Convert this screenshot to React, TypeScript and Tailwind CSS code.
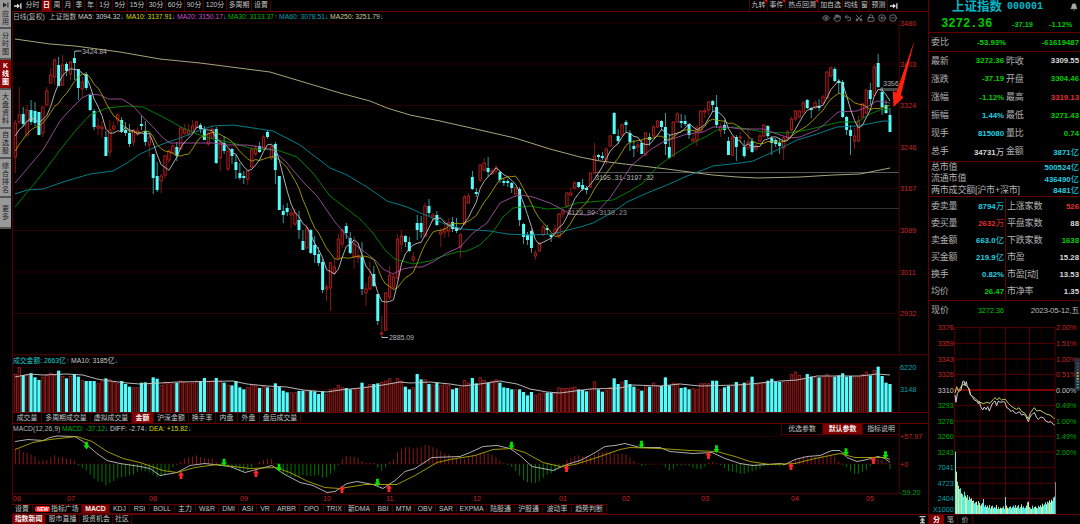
import React from 'react';
import { Bell, Eye, Hand, Undo2, Scissors, Lock, CirclePlus, CircleMinus } from 'lucide-react';
import clsx from 'clsx';

type Candle = [high: number, top: number, bottom: number, low: number, up: 0 | 1];
type Point = [number, number];
type TabItem = { label: string; width: string; active?: boolean; mark?: boolean; badge?: boolean };

const STEP = 3.94;
const xAt = (i: number) => 15.3 + i * STEP;

const candles: Candle[] = [
  [120,123,157,173,1],[87,115,122,124,1],[107,114,124,127,0],[105,110,135,137,1],[100,110,122,125,0],
  [102,111,123,126,0],[112,112,135,135,0],[107,107,133,137,1],[87,91,105,106,1],[68,75,83,84,1],
  [58,60,77,85,1],[57,65,86,86,0],[55,65,85,86,1],[62,64,71,76,0],[61,62,74,80,1],
  [51,58,63,80,0],[69,69,88,100,0],[77,82,89,98,1],[72,74,88,90,0],[95,95,110,111,0],
  [109,111,127,130,0],[118,126,128,135,1],[121,127,129,138,1],[131,137,156,156,0],[120,130,152,157,1],
  [121,126,129,132,1],[113,115,120,125,1],[117,120,132,133,0],[122,130,133,136,0],[124,133,144,147,0],
  [129,130,142,146,1],[127,131,134,136,1],[115,124,126,130,0],[121,131,142,146,0],[135,137,145,157,1],
  [154,154,178,194,0],[162,176,190,192,0],[174,176,181,193,1],[155,156,175,179,1],[149,151,160,163,1],
  [144,146,153,154,1],[142,147,156,161,0],[127,128,149,150,1],[124,129,133,135,1],[124,131,134,136,1],
  [120,126,132,133,1],[121,122,127,129,1],[123,125,129,133,0],[126,130,140,140,0],[132,133,144,146,1],
  [125,129,138,139,1],[127,129,163,164,0],[137,143,158,171,1],[136,143,151,154,0],[149,151,169,171,1],
  [148,149,156,164,0],[155,162,170,179,0],[163,173,178,180,0],[171,176,178,184,0],[170,171,179,185,1],
  [147,150,167,168,1],[145,148,154,156,1],[142,146,152,153,0],[135,137,149,150,1],[130,132,137,139,0],
  [145,147,158,160,1],[142,144,170,184,0],[176,176,210,210,0],[205,211,215,223,0],[203,208,212,216,0],
  [208,213,215,228,1],[209,213,224,226,1],[211,220,230,239,0],[230,241,250,250,0],[224,228,248,249,1],
  [229,230,253,254,0],[236,245,255,263,0],[247,254,263,266,0],[259,262,290,293,0],[284,287,289,301,1],
  [262,263,288,311,1],[258,267,273,275,1],[234,239,258,259,1],[229,230,244,248,1],[223,226,233,239,0],
  [232,238,253,254,0],[236,244,257,269,1],[246,256,258,263,1],[242,257,289,295,0],[283,289,293,306,1],
  [262,277,289,290,1],[266,274,286,287,0],[294,294,321,325,0],[316,333,334,337,1],[292,293,330,331,1],
  [266,275,297,300,1],[274,277,287,289,1],[234,239,278,279,1],[230,236,244,252,1],[235,236,242,247,0],
  [237,242,251,252,0],[252,257,260,264,1],[215,223,230,240,0],[216,223,232,238,0],[203,206,236,237,1],
  [199,206,213,216,0],[213,215,217,222,1],[211,215,225,226,0],[228,232,234,247,1],[220,229,232,238,1],
  [218,223,231,237,1],[217,222,229,232,0],[218,227,231,233,0],[233,235,247,258,1],[195,197,224,225,1],
  [193,196,203,204,1],[171,177,189,190,0],[188,192,194,197,0],[164,165,180,182,1],[158,163,170,172,1],
  [157,168,172,177,0],[168,171,174,175,1],[165,168,171,174,1],[171,172,180,183,0],[178,181,183,186,0],
  [179,181,183,187,0],[182,183,188,193,0],[187,188,194,196,1],[187,189,220,226,0],[223,224,237,244,0],
  [232,235,240,245,0],[229,231,248,253,0],[250,253,256,260,1],[242,243,251,252,1],[224,227,235,236,1],
  [225,228,230,234,0],[234,235,237,242,0],[225,229,233,235,1],[213,214,237,238,1],[209,211,214,218,1],
  [192,193,206,208,1],[187,193,195,196,1],[181,183,188,190,1],[182,182,187,188,0],[179,185,189,191,0],
  [186,188,190,194,0],[173,173,187,188,1],[143,156,173,174,1],[154,155,157,160,0],[152,156,158,160,0],
  [148,149,160,165,1],[135,136,146,147,1],[112,113,134,134,0],[129,136,141,144,0],[123,125,135,136,1],
  [120,122,125,132,0],[130,133,142,151,0],[140,146,149,157,0],[142,145,147,152,1],[140,143,154,154,0],
  [133,133,155,156,1],[133,137,140,146,0],[125,127,136,137,1],[120,121,127,128,1],[120,121,127,130,0],
  [113,127,144,155,0],[134,147,158,159,0],[121,122,156,157,1],[112,114,122,123,1],[114,121,123,128,0],
  [115,121,124,126,0],[124,124,135,139,0],[133,139,141,142,1],[125,128,140,146,1],[110,111,131,132,1],
  [108,111,112,118,1],[101,102,110,115,1],[100,101,105,112,0],[95,107,125,128,0],[123,127,131,137,1],
  [120,125,130,134,0],[137,141,155,155,0],[136,137,155,156,1],[135,137,147,161,0],[132,137,138,143,1],
  [140,147,156,158,0],[128,142,148,150,1],[138,141,152,153,0],[144,146,149,151,1],[133,136,141,142,1],
  [124,125,136,137,1],[125,126,136,138,0],[136,138,143,155,0],[138,140,144,147,0],[138,143,146,154,0],
  [136,138,148,160,1],[130,132,138,139,1],[117,119,130,131,1],[110,111,119,121,1],[110,111,117,118,1],
  [101,103,112,113,1],[99,100,108,109,0],[107,108,110,118,0],[100,103,108,109,1],[99,106,108,111,0],
  [95,97,103,104,1],[71,72,98,99,1],[66,68,76,77,1],[67,69,81,82,0],[79,81,83,93,0],
  [80,82,117,118,0],[116,117,130,135,0],[125,130,136,155,0],[128,136,141,149,1],[116,121,141,142,1],
  [103,104,117,118,1],[89,90,113,114,1],[83,90,99,105,0],[64,67,95,96,1],[54,63,87,88,0],
  [87,92,107,115,0],[100,105,113,114,0],[108,115,132,132,0],
];

// bar tops of the turnover pane, in thirds of a pixel below y=350
const volume = [
  72,52,75,75,70,82,90,80,75,68,75,62,78,85,78,72,80,90,93,93,93,100,92,85,88,95,100,93,102,110,112,112,98,97,100,
  82,86,105,95,100,100,98,92,96,100,98,92,94,84,95,92,84,92,98,104,106,93,112,118,112,104,106,114,108,112,116,100,
  110,122,127,127,127,123,122,122,123,124,132,124,132,118,115,105,112,114,118,118,115,98,110,102,102,100,96,92,85,
  98,84,92,110,118,112,72,88,88,102,104,98,106,100,106,118,114,112,90,98,84,100,82,90,98,92,88,98,112,114,118,118,
  118,126,136,126,134,130,128,128,128,128,112,114,114,112,110,118,120,124,118,94,118,125,120,112,85,102,95,90,102,
  110,116,122,106,110,98,105,108,82,106,98,100,114,112,118,115,118,100,100,100,92,92,118,112,108,106,96,102,98,92,
  80,102,100,98,92,86,96,96,95,95,72,65,75,85,72,80,82,82,80,72,80,80,76,70,80,78,80,80,72,65,76,60,50,78,98,102,
];

// histogram ends, same unit; the zero line is at 340
const macd = [
  296,296,305,306,312,318,330,330,328,320,314,322,320,324,326,330,345,352,360,372,385,392,395,405,398,392,383,380,
  378,375,372,365,360,362,366,372,380,378,374,362,350,343,335,324,320,318,315,320,322,324,324,334,343,345,348,350,
  355,360,362,360,352,340,334,328,325,326,338,355,370,372,378,380,378,374,376,376,376,374,382,380,370,360,343,325,
  316,318,318,322,332,337,337,337,352,362,350,335,326,306,295,290,290,294,291,290,283,285,290,295,302,308,312,318,
  325,326,326,320,314,316,310,308,308,312,320,330,337,343,350,362,375,388,395,396,398,392,382,372,368,362,352,345,
  328,322,316,314,316,318,320,312,305,305,304,305,310,310,310,312,320,330,338,347,344,342,342,340,342,350,360,355,
  346,345,344,346,352,356,356,348,336,334,338,344,352,362,364,366,370,370,366,363,360,355,348,346,344,346,348,346,
  340,334,326,322,318,318,318,320,320,315,312,312,318,332,343,350,362,370,370,365,358,347,335,325,328,335,356,
];

const ma20: Point[] = [[15,183],[43,150],[60,121],[67,113],[82,98],[90,94],[100,95],[108,99],[122,99],[133,106],[143,117],[155,129],[163,138],[170,143],[187,143],[213,143],[227,145],[247,145],[260,147],[273,150],[287,163],[305,184],[317,196],[335,222],[353,243],[375,260],[383,269],[393,274],[403,269],[413,267],[422,267],[433,262],[447,253],[460,247],[473,233],[487,223],[500,203],[513,197],[520,195],[533,197],[550,203],[563,210],[570,214],[588,215],[597,212],[610,198],[620,183],[632,165],[650,150],[663,142],[687,134],[703,132],[713,127],[727,127],[740,129],[763,129],[777,134],[790,138],[800,137],[817,130],[827,122],[838,112],[857,111],[867,107],[877,101],[890,103]];
const ma30: Point[] = [[15,207],[30,189],[43,173],[60,150],[77,129],[90,115],[107,108],[127,106],[143,107],[163,117],[183,128],[197,134],[213,139],[233,143],[253,149],[277,150],[297,157],[313,173],[330,196],[347,209],[360,219],[373,233],[385,250],[395,259],[413,264],[430,261],[443,256],[457,252],[467,251],[480,245],[493,232],[503,217],[513,208],[530,206],[547,209],[563,208],[577,203],[613,200],[630,191],[643,183],[657,167],[673,155],[693,143],[707,136],[717,130],[733,127],[747,129],[763,132],[787,133],[807,130],[827,125],[840,122],[857,122],[870,114],[880,110],[890,109]];
const ma60: Point[] = [[15,194],[27,190],[43,189],[63,182],[90,174],[113,171],[127,163],[140,154],[160,145],[180,138],[200,130],[213,126],[233,125],[253,128],[273,131],[300,145],[330,168],[347,175],[367,187],[387,201],[407,207],[430,217],[447,225],[463,229],[490,231],[507,234],[530,235],[553,234],[580,227],[593,223],[613,212],[627,202],[647,193],[667,185],[687,176],[703,170],[713,166],[740,163],[753,161],[773,152],[797,140],[817,134],[837,127],[857,126],[873,123],[883,121],[890,121]];
const ma250: Point[] = [[15,39],[50,44],[75,46],[120,52],[160,59],[200,63],[270,72],[310,84],[340,93],[370,101],[387,108],[410,115],[440,121],[480,130],[515,138],[550,149],[580,157],[600,161],[633,165],[667,169],[697,173],[713,175],[737,177],[757,178],[800,177],[833,175],[860,174],[880,170],[890,168]];
const volMa: Point[] = [[15,377],[30,374],[43,375],[67,374],[83,375],[97,379],[110,381],[127,383],[140,384],[160,383],[177,382],[233,381],[247,384],[267,386],[287,387],[303,390],[327,392],[340,390],[360,388],[377,386],[400,382],[410,383],[430,382],[450,384],[463,386],[480,384],[500,381],[517,384],[530,389],[547,392],[560,393],[575,391],[590,389],[620,388],[633,385],[660,386],[680,384],[700,386],[737,385],[750,384],[780,381],[797,380],[817,376],[860,376],[877,374],[890,375]];
const diff: Point[] = [[15,441],[28,439],[43,440],[50,437],[57,435.5],[75,436],[83,441],[97,453],[107,460],[120,463],[140,466],[150,468],[160,475],[177,472],[190,465],[205,463],[230,466],[245,472],[260,468],[272,465],[283,473],[300,482],[313,485],[327,492],[335,491],[347,483],[357,481],[373,484],[383,488],[395,480],[405,471],[415,468],[432,457],[460,456],[470,452],[483,446],[497,445],[510,448],[520,455],[532,466],[553,470],[567,464],[580,460],[590,455],[605,446],[615,445],[625,443],[640,447],[660,447],[670,451],[693,453],[712,452],[725,458],[740,463],[753,465],[780,463],[785,464],[795,459],[807,456],[820,455],[832,450],[840,450],[847,457],[857,461],[867,459],[878,456],[885,458],[890,462]];
const dea: Point[] = [[15,449],[33,442],[50,439],[77,436],[92,441],[107,451],[123,458],[140,462],[163,470],[177,472],[195,467],[217,464],[250,468],[275,467],[290,472],[308,481],[325,487],[340,488],[365,484],[397,484],[415,475],[437,462],[450,459],[475,455],[493,449],[512,448],[525,452],[543,462],[560,466],[575,464],[597,457],[620,449],[630,447],[660,448],[690,450],[717,451],[735,456],[750,461],[770,464],[795,463],[815,458],[840,453],[855,457],[875,457],[885,457],[890,459]];

const buySignals: Point[] = [[181,475],[256,473],[342,489],[389,488],[566.5,468],[708.5,455],[791,466],[873.5,460]];
const sellSignals: Point[] = [[86.5,445],[224,462],[279,467],[377.5,482],[511.5,445],[641.5,444],[716.5,448.5],[846,451.5],[885.5,454.5]];

// closes before the first visible candle
const seed = [182, 175, 166, 158, 150, 146, 140, 137, 133];
const closes = [...seed, ...candles.map(([, top, bottom, , up]) => (up ? top : bottom))];
const movingAverage = (n: number): Point[] =>
  candles.map((_, i) => {
    const end = i + seed.length + 1;
    return [xAt(i), closes.slice(end - n, end).reduce((a, b) => a + b, 0) / n];
  });

const toPoints = (pts: Point[]) => pts.map((p) => p.join(',')).join(' ');

const Line = ({ pts, color }: { pts: Point[]; color: string }) => (
  <polyline points={toPoints(pts)} fill="none" stroke={color} strokeWidth={0.9} strokeLinejoin="round" />
);

const priceAxis: [string, number][] = [
  ['3480', 23], ['3403', 64], ['3324', 105.5], ['3246', 147], ['3167', 188.5], ['3089', 230.5], ['3011', 272], ['2932', 313.5],
];
const months: [string, number][] = [
  ['06', 13], ['07', 67], ['08', 149], ['09', 240], ['10', 323], ['11', 386],
  ['12', 473], ['01', 559], ['02', 622], ['03', 701], ['04', 791], ['05', 866],
];

const periodTabs: TabItem[] = [
  { label: '分时', width: 'w-[18px]' },
  { label: '日', width: 'w-[10px]', active: true },
  { label: '周', width: 'w-[11px]' },
  { label: '月', width: 'w-[11px]' },
  { label: '季', width: 'w-[11px]' },
  { label: '年', width: 'w-[12px]' },
  { label: '1分', width: 'w-[16px]' },
  { label: '5分', width: 'w-[15px]' },
  { label: '15分', width: 'w-[19px]' },
  { label: '30分', width: 'w-[19px]' },
  { label: '60分', width: 'w-[19px]' },
  { label: '90分', width: 'w-[19px]' },
  { label: '120分', width: 'w-[23px]' },
  { label: '多周期', width: 'w-[25px]' },
  { label: '设置', width: 'w-[19px]' },
];
const toolTabs: TabItem[] = [
  { label: '九转', width: 'w-[18px]', mark: true },
  { label: '事件', width: 'w-[18px]', mark: true },
  { label: '热点回溯', width: 'w-[33px]', mark: true },
  { label: '加自选', width: 'w-[24px]' },
  { label: '均线', width: 'w-[17px]' },
  { label: '窗', width: 'w-[10px]' },
  { label: '预测', width: 'w-[18px]' },
];
const volumeTabs: TabItem[] = [
  { label: '成交量', width: 'w-[29px]' },
  { label: '多周期成交量', width: 'w-[49px]' },
  { label: '虚拟成交量', width: 'w-[41px]' },
  { label: '金额', width: 'w-[22px]', active: true },
  { label: '沪深金额', width: 'w-[35px]' },
  { label: '换手率', width: 'w-[27px]' },
  { label: '内盘', width: 'w-[22px]' },
  { label: '外盘', width: 'w-[22px]' },
  { label: '盘后成交量', width: 'w-[41px]' },
];
const indicatorTabs: TabItem[] = [
  { label: '设置', width: 'w-[21px]' },
  { label: '指标广场', width: 'w-[49px]', badge: true },
  { label: 'MACD', width: 'w-[28px]', active: true },
  { label: 'KDJ', width: 'w-[20px]' },
  { label: 'RSI', width: 'w-[20px]' },
  { label: 'BOLL', width: 'w-[25px]' },
  { label: '主力', width: 'w-[21px]' },
  { label: 'W&R', width: 'w-[23px]' },
  { label: 'DMI', width: 'w-[20px]' },
  { label: 'ASI', width: 'w-[18px]' },
  { label: 'VR', width: 'w-[17px]' },
  { label: 'ARBR', width: 'w-[26px]' },
  { label: 'DPO', width: 'w-[24px]' },
  { label: 'TRIX', width: 'w-[21px]' },
  { label: '新DMA', width: 'w-[29px]' },
  { label: 'BBI', width: 'w-[19px]' },
  { label: 'MTM', width: 'w-[22px]' },
  { label: 'OBV', width: 'w-[21px]' },
  { label: 'SAR', width: 'w-[21px]' },
  { label: 'EXPMA', width: 'w-[30px]' },
  { label: '陆股通', width: 'w-[28px]' },
  { label: '沪股通', width: 'w-[28px]' },
  { label: '波动率', width: 'w-[29px]' },
  { label: '趋势判断', width: 'w-[35px]' },
];
const newsTabs: TabItem[] = [
  { label: '指数新闻', width: 'w-[34px]', active: true },
  { label: '股市直播', width: 'w-[34px]' },
  { label: '投资机会', width: 'w-[33px]' },
  { label: '社区', width: 'w-[19px]' },
];

function TabRow({ items }: { items: TabItem[] }) {
  return (
    <div className="flex h-full">
      {items.map((t) => (
        <div
          key={t.label}
          className={clsx(
            'relative flex h-full shrink-0 items-center justify-center whitespace-nowrap border-r border-[#4a0000] text-[6.9px] leading-none',
            t.width,
            t.active ? 'bg-[#800000] font-bold text-[#f0f0f0]' : 'text-[#c4c4c4]',
          )}
        >
          {t.badge && (
            <span className="mr-px rounded-[2px] bg-[#ff1a1a] px-[1.5px] py-[0.5px] text-[5px] font-bold italic text-white">NEW</span>
          )}
          {t.label}
          {t.mark && <span className="absolute right-0 top-0 size-[3px] bg-[#e01010] [clip-path:polygon(0_0,100%_0,100%_100%)]" />}
        </div>
      ))}
    </div>
  );
}

const sideItems = [
  { label: '应用', height: 'h-[29px]', icon: true },
  { label: '分时图', height: 'h-[31px]' },
  { label: 'K线图', height: 'h-[30px]', active: true },
  { label: '大盘资料', height: 'h-[39px]' },
  { label: '自选股', height: 'h-[30px]' },
  { label: '综合排名', height: 'h-[39px]' },
  { label: '更多', height: 'h-[31px]' },
];

function Sidebar() {
  return (
    <div className="flex w-3 shrink-0 flex-col">
      {sideItems.map((s) => (
        <div
          key={s.label}
          className={clsx(
            'flex w-[11px] flex-col items-center justify-center border-b-2 border-[#555] text-[7px] leading-[8px]',
            s.height,
            s.active ? 'bg-[#8c0000] font-bold text-white' : 'bg-[#999] text-[#1c1c1c]',
          )}
        >
          {s.icon && (
            <svg width="6" height="6" viewBox="0 0 6 6" className="mb-0.5">
              <path d="M0 0.5 L4 3 L0 5.5Z M4.4 0.5h1v5h-1z" fill="#222" />
            </svg>
          )}
          {[...s.label].map((c) => (
            <span key={c}>{c}</span>
          ))}
        </div>
      ))}
    </div>
  );
}

function JumpIcon() {
  return (
    <svg width="8" height="6" viewBox="0 0 8 6">
      <path d="M0 2.2h3V0.5L6 3 3 5.5V3.8H0z M6.2 0.3h1.3v5.4H6.2z" fill="#e0e0e0" />
    </svg>
  );
}

const maLegend = [
  { text: 'MA5: 3094.32', arrow: '↓', cls: 'w-[48px] text-[#d0d0d0]' },
  { text: 'MA10: 3137.91', arrow: '↓', cls: 'w-[51px] text-[#d8d800]' },
  { text: 'MA20: 3150.17', arrow: '↓', cls: 'w-[51px] text-[#c850c8]' },
  { text: 'MA30: 3133.37', arrow: '↑', cls: 'w-[51px] text-[#00b400]' },
  { text: 'MA60: 3078.51', arrow: '↓', cls: 'w-[51px] text-[#00a0b0]' },
  { text: 'MA250: 3251.79', arrow: '↓', cls: 'w-[56px] text-[#c8c896]' },
];

function Trend({ dir }: { dir: string }) {
  return <span className={dir === '↑' ? 'text-[#ff3030]' : 'text-[#30b0e0]'}>{dir}</span>;
}

function PriceChart() {
  return (
    <svg width="916" height="332" viewBox="12 23 916 332" className="block overflow-visible">
      {priceAxis.map(([label, y]) => (
        <g key={label}>
          <line x1="13" x2="899" y1={y} y2={y} stroke="#240000" />
          <text x="900" y={y + 2.8} fontSize="7.4" fill="#c82424">{label}</text>
        </g>
      ))}
      <line x1="594" x2="899" y1="172.5" y2="172.5" stroke="#555" />
      <line x1="568" x2="899" y1="208.5" y2="208.5" stroke="#303030" />
      <rect x="880" y="88" width="19" height="3" fill="#484848" />

      {candles.map(([high, top, bottom, low, up], i) => {
        const x = xAt(i);
        return up ? (
          <g key={i} stroke="#c82424" strokeWidth="0.8">
            <line x1={x} x2={x} y1={high} y2={low} strokeOpacity="0.8" />
            <rect x={x - 1.2} y={top} width="2.4" height={Math.max(bottom - top, 0.8)} fill="#1c0202" />
          </g>
        ) : (
          <g key={i} fill="#54fcfc">
            <rect x={x - 0.4} y={high} width="0.8" height={low - high} fillOpacity="0.75" />
            <rect x={x - 1.5} y={top} width="3" height={Math.max(bottom - top, 1)} />
          </g>
        );
      })}

      <Line pts={ma250} color="#b8b888" />
      <Line pts={ma60} color="#008c98" />
      <Line pts={ma30} color="#008c00" />
      <Line pts={ma20} color="#a050a0" />
      <Line pts={movingAverage(10)} color="#a8a000" />
      <Line pts={movingAverage(5)} color="#c0c0c0" />

      <g fill="#b4b4b4" fontSize="7" fontFamily="Liberation Mono, monospace">
        <text x="595" y="179.5" textLength="59">3195.31-3197.32</text>
        <text x="567" y="214.5" textLength="60" fill="#989898">3129.09-3130.23</text>
        <text x="883" y="85.5" textLength="16">3356</text>
      </g>
      <g fill="#b4b4b4" fontSize="7">
        <text x="82" y="53.5" textLength="25">3424.84</text>
        <text x="389" y="340" textLength="25">2885.09</text>
      </g>
      <path d="M75.5 52v-1h6M382 336.5v1h6" fill="none" stroke="#b4b4b4" />
      <path d="M12.5 23V355M899.3 23V355" stroke="#4c0000" />
      <path d="M12 354.8H928" stroke="#5a0000" />
      <path d="M914.5 40 L901 95 L903.5 97.5 L893.5 107 L892.8 91 L896.3 92.5 Z" fill="#ff2010" />
    </svg>
  );
}

function VolumeChart() {
  return (
    <svg width="916" height="46" viewBox="12 367 916 46" className="block overflow-visible">
      <path d="M13 367.5H899M13 389.5H899" stroke="#200000" />
      {volume.map((v, i) => {
        const y = 350 + v / 3;
        const x = xAt(i);
        return candles[i][4] ? (
          <rect key={i} x={x - 1.2} y={y + 0.4} width="2.5" height={412 - y} fill="#2a0404" stroke="#a82020" strokeWidth="0.8" />
        ) : (
          <rect key={i} x={x - 1.6} y={y} width="3.2" height={412.4 - y} fill="#54fcfc" />
        );
      })}
      <Line pts={volMa} color="#c8c8c8" />
      <path d="M12.5 367V413M899.3 367V413" stroke="#4c0000" />
      <path d="M12 412.5H928" stroke="#700000" strokeWidth="0.9" />
      <g fontSize="7.4" fill="#00a0a8">
        <text x="900" y="369.8">6220</text>
        <text x="900" y="392.3">3148</text>
      </g>
    </svg>
  );
}

function MacdChart() {
  return (
    <svg width="916" height="69" viewBox="12 434.5 916 69" className="block overflow-visible">
      <path d="M13 435.8H899M13 463.5H899" stroke="#280000" />
      {macd.map((v, i) => {
        const x = xAt(i);
        return <line key={i} x1={x} x2={x} y1={463.5} y2={350 + v / 3} stroke={v < 340 ? '#981c1c' : '#008400'} strokeWidth="0.9" />;
      })}
      <Line pts={diff} color="#c0c0c0" />
      <Line pts={dea} color="#b0a800" />
      {buySignals.map(([x, y]) => (
        <path key={x} transform={`translate(${x} ${y})`} d="M0 -4 L3 0 H1.4 V3.6 H-1.4 V0 H-3Z" fill="#ff2828" />
      ))}
      {sellSignals.map(([x, y]) => (
        <path key={x} transform={`translate(${x} ${y})`} d="M0 4 L3 0 H1.4 V-3.8 H-1.4 V0 H-3Z" fill="#00e600" />
      ))}
      <path d="M12.5 434V503M899.3 424V493" stroke="#4c0000" />
      <path d="M12 493.3H899" stroke="#5a0000" />
      <g fontSize="7.2" fill="#c82424">
        {months.map(([m, x]) => (
          <text key={m} x={x} y="500.7">{m}</text>
        ))}
        <text x="900" y="438.2">+57.97</text>
        <text x="900" y="466.4">+0</text>
        <text x="900" y="494.8" fill="#00a000">-59.20</text>
      </g>
    </svg>
  );
}

type Cell = { label: string; value: string; unit?: string; cls: string };
const G = 'text-[#00d000]';
const R = 'text-[#e03030]';
const C = 'text-[#20d0e0]';
const W = 'text-[#d8d8d8]';

const quoteRows: [Cell, Cell][] = [
  [{ label: '最新', value: '3272.36', cls: G }, { label: '昨收', value: '3309.55', cls: W }],
  [{ label: '涨跌', value: '-37.19', cls: G }, { label: '开盘', value: '3304.46', cls: G }],
  [{ label: '涨幅', value: '-1.12%', cls: G }, { label: '最高', value: '3319.13', cls: R }],
  [{ label: '振幅', value: '1.44%', cls: C }, { label: '最低', value: '3271.43', cls: G }],
  [{ label: '现手', value: '815080', cls: C }, { label: '量比', value: '0.74', cls: G }],
  [{ label: '总手', value: '34731', unit: '万', cls: W }, { label: '金额', value: '3871', unit: '亿', cls: C }],
];
const capRows: Cell[] = [
  { label: '总市值', value: '500524', unit: '亿', cls: C },
  { label: '流通市值', value: '436490', unit: '亿', cls: C },
  { label: '两市成交额[沪市+深市]', value: '8481', unit: '亿', cls: C },
];
const flowRows: [Cell, Cell][] = [
  [{ label: '委卖量', value: '8794', unit: '万', cls: C }, { label: '上涨家数', value: '526', cls: R }],
  [{ label: '委买量', value: '2632', unit: '万', cls: R }, { label: '平盘家数', value: '88', cls: W }],
  [{ label: '卖金额', value: '663.0', unit: '亿', cls: C }, { label: '下跌家数', value: '1638', cls: G }],
  [{ label: '买金额', value: '219.9', unit: '亿', cls: C }, { label: '市盈', value: '15.28', cls: W }],
  [{ label: '换手', value: '0.82%', cls: C }, { label: '市盈[动]', value: '13.53', cls: W }],
  [{ label: '均价', value: '26.47', cls: G }, { label: '市净率', value: '1.35', cls: W }],
];

function Field({ cell }: { cell: Cell }) {
  return (
    <div className="flex items-center justify-between whitespace-nowrap">
      <span className="text-[9px] tracking-[-0.2px] text-[#b0b0b0]">{cell.label}</span>
      <span className={clsx('text-[7.8px] font-bold', cell.cls)}>
        {cell.value}
        {cell.unit && <span className="text-[8.4px] font-normal">{cell.unit}</span>}
      </span>
    </div>
  );
}

function PairGrid({ rows, className, divided }: { rows: [Cell, Cell][]; className: string; divided?: boolean }) {
  return (
    <div className={clsx('grid grid-cols-[76px_1fr] border-b border-[#600000] leading-none', className)}>
      {[0, 1].map((col) => (
        <div key={col} className={clsx('grid grid-rows-6 pr-px', col === 0 && 'pl-0.5', col === 1 && 'pl-px', divided && col === 1 && 'border-l border-[#600000]')}>
          {rows.map((r) => (
            <Field key={r[col].label} cell={r[col]} />
          ))}
        </div>
      ))}
    </div>
  );
}

// The intraday chart is drawn at three units per pixel
const intraday: Point[] = [[90,240],[93,262],[97,235],[103,228],[108,225],[113,200],[117,198],[120,212],[124,200],[127,215],[133,222],[137,240],[142,245],[148,255],[155,258],[160,266],[163,260],[167,275],[173,285],[178,276],[183,284],[188,275],[193,288],[200,270],[205,262],[210,258],[215,272],[220,258],[225,262],[235,260],[240,262],[245,278],[250,280],[258,290],[263,285],[268,293],[275,295],[283,290],[290,300],[297,298],[303,305],[310,320],[317,302],[322,298],[328,292],[335,308],[340,313],[347,306],[355,308],[362,318],[370,322],[378,320],[385,328],[389,330]];
const intradayAvg: Point[] = [[90,235],[95,215],[100,228],[105,220],[112,210],[117,207],[122,210],[130,218],[136,240],[145,245],[155,255],[165,262],[175,266],[185,262],[195,265],[205,253],[210,248],[217,255],[222,248],[230,255],[240,252],[250,265],[257,272],[265,278],[275,283],[282,278],[290,290],[300,295],[310,312],[317,292],[328,278],[335,288],[345,286],[355,292],[365,298],[375,300],[385,308],[389,312]];
const minuteVolume = [
  410,470,500,512,522,520,535,538,545,530,542,548,540,555,545,552,550,558,556,565,562,560,570,558,564,572,568,564,552,575,
  570,576,572,578,570,580,574,572,580,576,578,570,582,576,582,578,580,578,574,582,546,572,578,580,576,574,580,576,572,578,
  570,578,574,570,580,576,568,578,574,580,578,572,562,560,576,580,582,572,580,576,574,578,580,572,576,570,576,566,572,568,
  562,568,560,563,556,562,554,558,548,545,
];
const scale: [string, number, string, string][] = [
  ['3376', 38, '2.00%', '#c82424'], ['3359', 85, '1.51%', '#c82424'], ['3343', 132, '1.00%', '#c82424'],
  ['3326', 178, '0.51%', '#c82424'], ['3310', 225, '0.00%', '#c8c8c8'], ['3293', 271, '0.49%', '#00a800'],
  ['3276', 318, '1.00%', '#00a800'], ['3260', 364, '1.49%', '#00a800'], ['3243', 411, '2.00%', '#00a800'],
  ['7041', 458, '', '#00a0a8'], ['4723', 505, '', '#00a0a8'], ['2404', 550, '', '#00a0a8'], ['X1000', 583, '', '#00a0a8'],
];

function IntradayChart() {
  return (
    <svg width="151" height="194" viewBox="12 15 453 582" className="block">
      <g stroke="#680000" strokeWidth="2.5">
        {scale.slice(0, 12).map(([l, y]) => (
          <line key={l} x1="88" x2="390" y1={y} y2={y} />
        ))}
        {[89, 165, 241, 313, 390].map((x) => (
          <line key={x} x1={x} x2={x} y1="38" y2="597" />
        ))}
        {[127, 203, 277, 350].map((x) => (
          <line key={x} x1={x} x2={x} y1="38" y2="597" strokeDasharray="3 6" strokeOpacity="0.7" />
        ))}
      </g>
      <line x1="88" x2="390" y1="225" y2="225" stroke="#980000" strokeWidth="5" />
      {minuteVolume.map((v, i) => (
        <rect key={i} x={90 + i * 3} y={v} width="3" height={597 - v} fill={i % 7 === 3 || i % 5 === 1 ? '#e8e890' : '#54f4ec'} />
      ))}
      <rect x="390" y="501" width="3" height="96" fill="#888" />
      <polyline points={toPoints(intradayAvg)} fill="none" stroke="#c8c860" strokeWidth="3" />
      <polyline points={toPoints(intraday)} fill="none" stroke="#d0d0d0" strokeWidth="3" />
      <g fontSize="21.5">
        {scale.map(([l, y, pct, color]) => (
          <g key={l} fill={color}>
            <text x="86" y={y + 8} textAnchor="end">{l}</text>
            <text x="393" y={y + 8}>{pct}</text>
          </g>
        ))}
      </g>
      <rect x="449" y="129" width="16" height="98" fill="#283040" />
      <path d="M458 145V170" stroke="#687080" strokeWidth="4" strokeDasharray="3 6" />
      <path d="M458 172V196" stroke="#c8c850" strokeWidth="6" strokeDasharray="4 5" />
      <path d="M458 198V220" stroke="#40c0a0" strokeWidth="6" strokeDasharray="4 5" />
    </svg>
  );
}

function QuotePanel() {
  return (
    <div className="flex w-[152px] shrink-0 flex-col border-l border-[#600000]">
      <div className="flex h-[14px] items-center justify-end whitespace-nowrap leading-none text-[#00b8c8]">
        <span className="text-[12.5px] font-bold">上证指数</span>
        <span className="ml-[5px] font-['Liberation_Mono'] text-[10px] font-bold">000001</span>
        <Bell size={8} className="ml-[27px] mr-0.5" fill="#aaa" color="#aaa" />
      </div>
      <div className="flex h-[19px] items-center border-b border-[#600000] pl-3 pt-[3px] leading-none text-[#00c800]">
        <span className="w-[71px] font-['Liberation_Mono'] text-[12.2px] font-bold">3272.36</span>
        <span className="w-[37px] text-[7.4px] font-bold">-37.19</span>
        <span className="text-[7.4px] font-bold">-1.12%</span>
      </div>
      <div className="grid h-[19px] grid-cols-[25px_50px_1fr] items-center border-b border-[#600000] pl-0.5 pr-px pt-px text-right text-[7.8px] font-bold leading-none text-[#00d000]">
        <span className="text-left text-[9px] font-normal text-[#b0b0b0]">委比</span>
        <span>-53.93%</span>
        <span>-61619487</span>
      </div>
      <PairGrid rows={quoteRows} className="h-[110px]" />
      <div className="grid h-[35px] grid-rows-3 border-b border-[#600000] pl-0.5 pr-px leading-none">
        {capRows.map((c) => (
          <Field key={c.label} cell={c} />
        ))}
      </div>
      <PairGrid rows={flowRows} className="h-[104px] pt-px" divided />
      <div className="flex h-[19px] items-center pl-0.5 leading-none">
        <span className="w-[47px] text-[9px] text-[#b0b0b0]">现价</span>
        <span className="w-[38px] text-[7.2px] text-[#00c800]">3272.36</span>
        <span className="flex-1 whitespace-nowrap pr-px text-right text-[8px] tracking-[-0.25px] text-[#b8b8b8]">2023-05-12,五</span>
      </div>
      <IntradayChart />
      <div className="flex flex-1 border-t border-[#600000] text-[7px] leading-none text-[#b8b8b8]">
        <div className="flex w-[15px] items-center justify-center bg-[#800000] font-bold text-white">分</div>
        <div className="flex w-[14px] items-center justify-center border-r border-[#4a0000]">笔</div>
        <div className="flex w-[15px] items-center justify-center border-r border-[#4a0000]">价</div>
      </div>
    </div>
  );
}

export default function App() {
  return (
    <div className="flex h-[524px] w-[1080px] overflow-hidden bg-black font-['Liberation_Sans','Noto_Sans_CJK_SC',sans-serif]">
      <Sidebar />
      <div className="flex w-[916px] shrink-0 flex-col">
        {/* Period toolbar */}
        <div className="flex h-3 justify-between border-b border-[#700000] pr-[28px]">
          <div className="flex">
            <div className="flex w-3 items-center justify-center"><JumpIcon /></div>
            <TabRow items={periodTabs} />
          </div>
          <div className="flex border-l border-[#4a0000]">
            <TabRow items={toolTabs} />
            <div className="flex w-[12px] items-center justify-center"><JumpIcon /></div>
          </div>
        </div>

        {/* Moving average legend */}
        <div className="flex h-[11px] items-center justify-between border-l border-[#4c0000] pr-[31px] text-[6.8px] leading-none">
          <div className="flex items-center whitespace-nowrap">
            <span className="w-[36px] text-[#b8b8b8]">日线(复权)</span>
            <span className="w-[29px] text-[#b8b8b8]">上证指数</span>
            {maLegend.map((m) => (
              <span key={m.text} className={m.cls}>{m.text}<Trend dir={m.arrow} /></span>
            ))}
          </div>
          <div className="flex items-center gap-[3.2px] text-[#a0a0a0]">
            <Eye size={8} />
            <Hand size={8} />
            <Undo2 size={8} />
            <Scissors size={8} className="-rotate-90" />
            <Lock size={8} />
            <CirclePlus size={8} />
            <CircleMinus size={8} />
          </div>
        </div>
        <PriceChart />

        {/* Turnover */}
        <div className="flex h-3 items-center border-l border-[#4c0000] text-[6.8px] leading-none">
          <span className="w-[58px] whitespace-nowrap text-[#20c8c8]">成交金额: 2663亿<Trend dir="↑" /></span>
          <span className="whitespace-nowrap text-[#c8c8c8]">MA10: 3185亿<Trend dir="↓" /></span>
        </div>
        <VolumeChart />
        <div className="h-[11px] border-b border-l border-[#600000]"><TabRow items={volumeTabs} /></div>

        {/* MACD */}
        <div className="flex h-[11px] items-center justify-between border-l border-[#4c0000] pr-[28px] text-[6.8px] leading-none">
          <div className="flex whitespace-nowrap">
            <span className="w-[49px] text-[#b8b8b8]">MACD(12,26,9)</span>
            <span className="w-[48px] text-[#00b400]">MACD: -37.12<Trend dir="↓" /></span>
            <span className="w-[39px] text-[#d0d0d0]">DIFF: -2.74<Trend dir="↓" /></span>
            <span className="text-[#d8d800]">DEA: +15.82<Trend dir="↓" /></span>
          </div>
          <div className="h-full border-b border-l border-[#4a0000]">
            <TabRow
              items={[
                { label: '优选参数', width: 'w-[41px]' },
                { label: '默认参数', width: 'w-[40px]', active: true },
                { label: '指标说明', width: 'w-[37px]' },
              ]}
            />
          </div>
        </div>
        <MacdChart />

        <div className="flex h-[10px]">
          <div className="border-y border-[#600000]"><TabRow items={indicatorTabs} /></div>
        </div>
        <div className="flex flex-1 items-center justify-between border-t border-[#600000] pr-0.5">
          <TabRow items={newsTabs} />
          <svg width="7" height="8" viewBox="0 0 7 8">
            <path d="M0.5 0h6v1.2h-6z M3.5 1.6L6.3 4.6H4.5V6.3H6V7.6H1V6.3H2.5V4.6H0.7Z" fill="#c0c0c0" />
          </svg>
        </div>
      </div>
      <QuotePanel />
    </div>
  );
}
